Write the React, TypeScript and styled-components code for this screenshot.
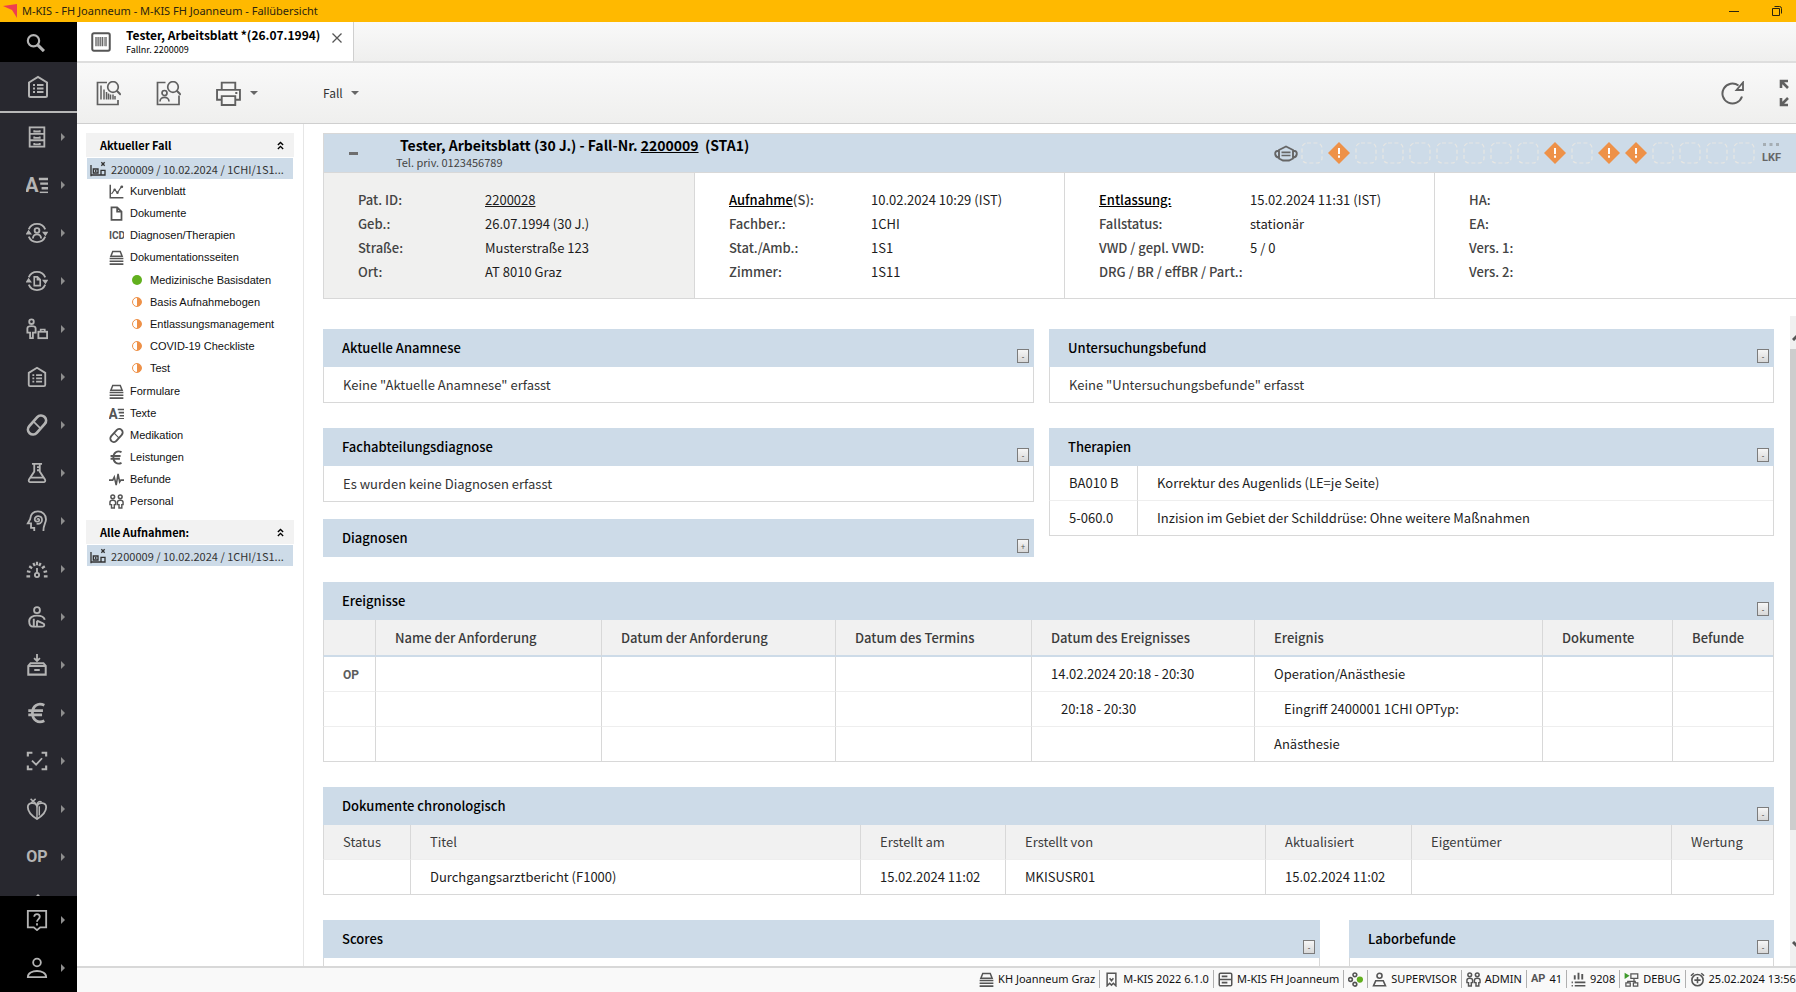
import React from 'react';
import styled, { createGlobalStyle, css } from 'styled-components';

const ui = '"Noto Sans CJK JP", "Open Sans", sans-serif';
const system = '"Noto Sans", "Open Sans", sans-serif';
const tree = '"Liberation Sans", Arial, sans-serif';
const blue = '#cddbe8';
const line = '#d8d8d8';

const Global = createGlobalStyle`
  * { box-sizing: border-box; }
  html, body { margin: 0; height: 100%; overflow: hidden; }
  body { font-family: ${ui}; font-size: 13px; line-height: 18px; color: #333; background: #fff; }
  button { font: inherit; color: inherit; background: none; border: 0; padding: 0; }
  a { color: inherit; }
  h1, h2, ul, dl, dd, p { margin: 0; padding: 0; }
  ul { list-style: none; }
`;

/* ---------- icons ---------- */

const Svg = styled.svg<{ $w?: number; $h?: number; $sw?: number }>`
  display: block;
  flex: none;
  width: ${p => p.$w ?? 24}px;
  height: ${p => p.$h ?? p.$w ?? 24}px;
  fill: none;
  stroke: currentColor;
  stroke-width: ${p => p.$sw ?? 2};
  .f { fill: currentColor; stroke: none; }
  text { fill: currentColor; stroke: none; font-family: Roboto, sans-serif; font-weight: 700; }
`;

const glyphs: Record<string, React.ReactNode> = {
  search: <><circle cx="9" cy="10.500" r="6.800" strokeWidth="2.600" /><path d="M14 15.500 21.500 23" strokeWidth="3.600" /></>,
  board: <><path d="M3 7.500 12 2l9 5.500V20.500a1.500 1.500 0 0 1-1.500 1.500h-15A1.500 1.500 0 0 1 3 20.500Z" /><path d="M7 10h2M7 13.500h2M7 17h2M11 10h6.500M11 13.500h6.500M11 17h6.500" strokeWidth="1.800" /></>,
  cabinet: <><rect x="4" y="1.500" width="16" height="21" /><path d="M4 8.500h16M4 15.500h16M9 4.500v1.500h6V4.500M9 11.500V13h6v-1.500M9 18.500V20h6v-1.500" strokeWidth="2" /></>,
  textA: <><text x="-1" y="20" fontSize="22">A</text><path d="M14 5.500H24M15.500 10.500H24M17 15.500H24" strokeWidth="2.600" /><path d="M15 20H24" strokeWidth="1.600" /></>,
  patientCycle: <><path d="M3 8A9.800 9.800 0 0 1 21 8M21 16A9.800 9.800 0 0 1 3 16" /><path className="f" d="M-.5 13.500 2.800 8.500l3.700 5ZM24.500 10.500 21.200 15.500l-3.700-5Z" /><circle cx="12" cy="9.300" r="2.600" /><path d="M7.500 18c.5-6 8.500-6 9 0" /></>,
  docCycle: <><path d="M3 8A9.800 9.800 0 0 1 21 8M21 16A9.800 9.800 0 0 1 3 16" /><path className="f" d="M-.5 13.500 2.800 8.500l3.700 5ZM24.500 10.500 21.200 15.500l-3.700-5Z" /><path d="M9 7.500h3.500l3 3v6.500H9ZM12.500 7.500v3h3" strokeWidth="1.800" /></>,
  visitor: <><circle cx="6" cy="4" r="2.500" /><path d="M4.500 22v-6H1.500v-4.500c0-3.500 9-3.500 9 0V16H7.500v6Z" strokeWidth="2" /><rect x="13.500" y="15" width="9.500" height="7" /><path d="M16 15v-2.500h4.500V15" strokeWidth="1.800" /></>,
  pill: <><rect x="6.500" y="0" width="11" height="24" rx="5.500" transform="rotate(42 12 12)" strokeWidth="3" /><path d="m8.300 8.300 7.400 7.400" strokeWidth="1.800" /></>,
  flask: <><path d="M6.500 2h11M9 2.500v8L3.300 19c-.8 1.500 0 3 1.500 3h14.400c1.500 0 2.300-1.500 1.500-3L15 10.500v-8M5.500 17h13M12 5.500h3M12 9h3" strokeWidth="2" /></>,
  head: <><path d="M9 23v-3.500H5.500v-5H2L4.500 10C5 4.500 8.500 1.500 13 1.500c5 0 8.800 3.500 8.800 8.500 0 4-3 6-2.800 13" /><path d="M12.500 10.500c0-1.500 2-1 2 .5 0 2.500-5 2.500-5-.8 0-4.700 8-4.700 8 .8 0 3.500-3 4.500-6 4" strokeWidth="1.900" /></>,
  gauge: <><path d="M.5 20h4M1 14.500l3.800.8M3.500 9l3.200 2.200M8 5.500l1.600 3.300M12 4v4M16 5.500l-1.600 3.300M20.500 9l-3.200 2.200M23 14.500l-3.800.8M23.500 20h-4" strokeWidth="2.400" /><path d="M12 11v5" strokeWidth="2" /><circle cx="12" cy="18.500" r="2.300" /></>,
  sitting: <><circle cx="12" cy="4.500" r="3.200" /><path d="M20.500 15c-1-4-4.500-4.500-8.500-4.500S3.500 12 3.500 16.500s2 6 4.500 6H18c2 0 3-2.500.5-3.500l-6.500-3M8.500 14v8M12 16v6" strokeWidth="2.100" /></>,
  inbox: <><path d="M12 0v7M8.800 4.500 12 7.700l3.200-3.200" /><path d="M2.500 13 5 10h14l2.500 3v9.500h-19ZM2.500 13h19M9 17.500h6" strokeWidth="2.200" /></>,
  euro: <path d="M20 3.500C13 0 7 4.500 7 12s6 12 13 8.500M2.500 9.500h16M2.500 14h15" strokeWidth="3" />,
  scan: <><path d="M2 7V3h5M17 3h5v4M22 17v4h-5M7 21H2v-4" strokeWidth="2.300" /><path d="m6.500 11.500 4.500 4.500 6.500-7" /></>,
  organ: <><path d="M12 23C5 18.500 2 14.500 2 10c0-5 8-6 10-1.500C14 4 22 5 22 10c0 4.500-3 8.500-10 13Z" /><path d="M12 22V8c0-4 3-5 5-3.500M5 1l5.500 5M10.500 1 5.500 5.500M14.500 9v10" strokeWidth="1.600" /></>,
  help: <><path d="M2 2h20v18h-6.500L12 23l-3.500-3H2Z" /><path d="M9 8.500c0-4 6-3.800 6 0 0 2.500-3 2.500-3 5.500M12 15.500V18" strokeWidth="2" /></>,
  user: <><circle cx="12" cy="6" r="4.200" /><path d="M2 22c0-9 20-9 20 0Z" /></>,
  barcode: <><rect x="1.500" y="1.500" width="21" height="21" rx="2" strokeWidth="2.400" /><path d="M6 6v11M8.500 6v11M11 6v11M13.500 6v11M18 6v11" strokeWidth="1.500" /><path d="M15.800 6v11" strokeWidth="1" /></>,
  barcodeSearch: <><path d="M11 1.500H1.500v22h20.500V19" strokeWidth="1.700" /><path d="M5 4.500v14M8 8.500v10M10.500 11v7.500M12.500 12.500v6M14.500 13.500v5M17 13.500v5M19 15v3.500" strokeWidth="1.500" /><circle cx="17" cy="6" r="5.300" strokeWidth="1.700" /><path d="m20.800 9.800 4 4" /></>,
  personSearch: <><path d="M9.500 1.500H1.500v22h21.500v-9" strokeWidth="1.700" /><circle cx="8.500" cy="12" r="2.500" strokeWidth="1.700" /><path d="M4 20.500c0-5.500 9-5.500 9 0" strokeWidth="1.700" /><circle cx="17" cy="6" r="5.300" strokeWidth="1.700" /><path d="m20.800 9.800 4 4" /></>,
  printer: <><path d="M5.500 8V1.500h13V8M5.500 18H1V8.500h22V18h-4.500M5.500 14.500h13V23h-13ZM18.500 11.500h2" strokeWidth="1.800" /></>,
  refresh: <><path d="M21 15.500A10 10 0 1 1 17.500 4.500" /><path d="M22 1.500v7.500h-6.500Z" strokeWidth="1.800" /></>,
  expand: <><path d="M2 9V2h7M2.500 2.500 9 9M2 19v7h7M2.500 25.500 9 19M26 9V2h-7M25.500 2.500 19 9M26 19v7h-7M25.500 25.500 19 19" strokeWidth="2.600" /></>,
  bed: <><path d="M1.500 6v17M1.500 21h21M22.500 22v-8h-6v7M5 12h7v6H5ZM17 2l5 5M22 2l-5 5" /><circle className="f" cx="8.500" cy="15" r="1.500" /></>,
  curve: <><path d="M2 1v21h21" strokeWidth="2.400" /><path d="m4 16 5-7 4.500 5L20 4" /><circle className="f" cx="9" cy="9" r="2" /><circle className="f" cx="13.500" cy="14" r="2" /><circle className="f" cx="20.500" cy="4.500" r="2.200" /></>,
  doc: <path d="M4 2h9l7 7v13H4ZM13 2v7h7" strokeWidth="2.800" />,
  icd: <text x="0" y="20" fontSize="21">ICD</text>,
  stack: <><path d="M6 2.500h12l3 7.500H3Z" strokeWidth="2.400" /><path d="M1 13.500h22M1 18h22M1 22.500h22" strokeWidth="2.600" /></>,
  pulse: <path d="M0 13h6l2.500-5 3 13 3-18 2.500 13 2-3H24" strokeWidth="2.500" />,
  people: <><circle cx="6" cy="4.500" r="3" strokeWidth="2.400" /><circle cx="18" cy="4.500" r="3" strokeWidth="2.400" /><path d="M4 22.500v-5.500H1.500v-4c0-4 9-4 9 0v4H8.500v5.500ZM16 22.500v-5.500h-2.500v-4c0-4 9-4 9 0v4H20.500v5.500Z" strokeWidth="2.300" /></>,
  mask: <><path d="M5 8 12 4.500 19 8v8.500L15 18.500H9L5 16.500ZM5 9H3.500C0 9 .5 15.500 5 15.500M19 9h1.500C24 9 23.500 15.500 19 15.500" strokeWidth="1.900" /><path d="M7.500 10.300h9M7.500 13.500h9" strokeWidth="1.700" /></>,
  bookmark: <path d="M5 2h14v20l-4-4-3 3-3-3-4 4ZM9 10l3 4 3-4" strokeWidth="2.400" />,
  server: <><rect x="2" y="2" width="20" height="20" rx="2" strokeWidth="2.400" /><path d="M2 12h20M6 7h9M6 17h9" strokeWidth="2.500" /></>,
  nodes: <><circle cx="11" cy="4.500" r="3" strokeWidth="2.600" /><circle cx="4" cy="12" r="3" strokeWidth="2.600" /><circle cx="11" cy="19.500" r="3" strokeWidth="2.600" /><circle cx="19" cy="12" r="5" fill="#62b01e" stroke="none" /></>,
  person: <><circle cx="12" cy="6" r="4" strokeWidth="2.600" /><path d="M6 14h12l3.500 8H2.500Z" strokeWidth="2.600" /></>,
  bars: <><path d="M6 12V5M12 12V1M18 12V3" strokeWidth="3" /><path d="M1 16.500h2M6 16.500h17M1 22h2M6 22h17" strokeWidth="2.600" /></>,
  debug: <><path d="M11 3h11v7H11ZM16 10v5M6 15h12M6 14v3M18 14v3M3 17.500h7v5H3ZM15 17.500h7v5h-7Z" strokeWidth="2" /><path d="M1 1v10l8-5Z" fill="#3f9a2b" stroke="none" /></>,
  alarm: <><circle cx="12" cy="13" r="9" strokeWidth="2.500" /><path d="M12 8v10M7 13h10M1.500 6l4.500-4M22.500 6 18 2" strokeWidth="2.500" /></>,
};

const boxes: Record<string, string> = { barcodeSearch: '0 0 25 25', personSearch: '0 0 25 25', expand: '0 0 28 28', icd: '0 0 31 24' };

const Icon = ({ name, w = 24, h }: { name: string; w?: number; h?: number }) => (
  <Svg viewBox={boxes[name] ?? '0 0 24 24'} $w={w} $h={h} aria-hidden="true">{glyphs[name]}</Svg>
);

const Caret = styled.span<{ $right?: boolean }>`
  width: 0;
  height: 0;
  ${p => p.$right
    ? css`border: 4px solid transparent; border-left-color: #8e8e8e; border-right: 0;`
    : css`border: 4px solid transparent; border-top-color: #666; border-bottom: 0;`}
`;

/* ---------- window frame ---------- */

const Shell = styled.div`
  display: flex;
  flex-direction: column;
  width: calc(100% + 11px);
  height: 100vh;
`;

const TitleBar = styled.header`
  display: flex;
  align-items: center;
  flex: none;
  height: 22px;
  padding: 0 9px 0 3px;
  gap: 5px;
  background: #ffb900;
  color: #2b2410;
  font: 11px/20px ${system};
`;

const WindowTitle = styled.h1`
  flex: 1;
  font: inherit;
`;

const WindowButton = styled.button`
  display: grid;
  place-items: center;
  width: 43px;
  height: 22px;
  margin-left: -5px;
`;

const Frame = styled.div`
  display: flex;
  flex: 1;
  min-height: 0;
`;

const Rail = styled.nav`
  display: flex;
  flex-direction: column;
  flex: none;
  width: 77px;
  background: #28282f;
  color: #b4b4b4;
`;

const RailScroll = styled.div`
  flex: 1;
  min-height: 0;
  overflow: hidden;
`;

const RailButton = styled.button<{ $black?: boolean; $short?: boolean; $home?: boolean }>`
  display: flex;
  align-items: center;
  flex: none;
  width: 77px;
  height: ${p => (p.$short ? 40 : 48)}px;
  padding-left: 26px;
  gap: 13px;
  background: ${p => (p.$black ? '#000' : 'transparent')};
  ${p => p.$home && css`height: 51px; border-bottom: 2px solid #b8b8b8;`}
`;

const RailWord = styled.span`
  width: 22px;
  font: 700 16px/24px Roboto, sans-serif;
`;

const Workspace = styled.div`
  display: flex;
  flex-direction: column;
  flex: 1;
  min-width: 0;
`;

const TabStrip = styled.div`
  display: flex;
  flex: none;
  height: 41px;
  border-bottom: 2px solid #dedede;
  background: linear-gradient(#f9f9f9, #efefee);
`;

const Tab = styled.div`
  display: flex;
  align-items: center;
  width: 277px;
  padding: 0 11px 0 14px;
  gap: 15px;
  background: #fff;
  border-right: 1px solid #cfcfcf;
  color: #555;
`;

const TabText = styled.div`
  flex: 1;
  color: #000;
  white-space: nowrap;
`;

const TabName = styled.div`
  font: 700 12px/16px ${ui};
`;

const TabSub = styled.div`
  font: 9px/14px ${ui};
`;

const TabClose = styled.button`
  margin: -8px 0 0 -3px;
  padding-right: 3px;
`;

const Toolbar = styled.div`
  display: flex;
  align-items: center;
  flex: none;
  height: 61px;
  padding-left: 19px;
  background: linear-gradient(#f9f9f9, #efefee);
  border-bottom: 1px solid #cfcfcf;
  color: #606060;
`;

const ToolGroup = styled.div`
  display: flex;
  align-items: center;
  width: 227px;
  gap: 35px;
`;

const ToolButton = styled.button`
  display: flex;
  align-items: center;
  gap: 9px;
`;

const MenuButton = styled(ToolButton)`
  flex: 1;
  gap: 8px;
  color: #333;
  font-size: 12px;
`;

const ToolEnd = styled.div`
  display: flex;
  align-items: center;
  gap: 34px;
`;

const Body = styled.div`
  display: flex;
  flex: 1;
  min-height: 0;
`;

/* ---------- case tree ---------- */

const Side = styled.aside`
  flex: none;
  width: 227px;
  padding: 9px 9px 0;
  border-right: 1px solid #e6e6e6;
  font: 11px/22px ${tree};
  color: #111;
`;

const SideHead = styled.button`
  display: flex;
  align-items: center;
  justify-content: space-between;
  width: 100%;
  height: 24px;
  padding: 0 10px 0 14px;
  background: #f2f2f2;
  font: 700 11px/22px ${ui};
  color: #000;
`;

const CaseRow = styled.a`
  display: flex;
  align-items: center;
  height: 21px;
  margin: 1px;
  padding-left: 3px;
  gap: 5px;
  background: ${blue};
  color: #333;
  font: 11px/18px ${ui};
  text-decoration: none;
  white-space: nowrap;
`;

const TreeList = styled.ul<{ $nested?: boolean }>`
  padding: ${p => (p.$nested ? '1px 0 1px 20px' : '0 0 8px 23px')};
`;

const TreeLink = styled.a`
  display: flex;
  align-items: center;
  height: 22px;
  gap: 6px;
  color: #111;
  text-decoration: none;
  white-space: nowrap;
`;

const TreeIcon = styled.span`
  display: grid;
  place-items: center;
  width: 15px;
  color: #555;
`;

const Dot = styled.span<{ $half?: boolean }>`
  width: 10px;
  height: 10px;
  border-radius: 50%;
  ${p => p.$half
    ? css`border: 1px solid #ee9148; background: linear-gradient(90deg, #fff 50%, #ee9148 50%);`
    : css`background: #62b01e;`}
`;

/* ---------- patient header ---------- */

const Main = styled.main`
  display: flex;
  flex-direction: column;
  flex: 1;
  min-width: 0;
`;

const Patient = styled.section`
  flex: none;
  margin: 9px 2px 17px 19px;
  border: 1px solid ${line};
`;

const PatientBar = styled.header`
  display: flex;
  align-items: center;
  height: 39px;
  padding: 0 22px 0 25px;
  background: ${blue};
  border-bottom: 1px solid ${line};
`;

const Minus = styled.button`
  width: 9px;
  height: 3px;
  background: #6e6e6e;
`;

const PatientText = styled.div`
  flex: 1;
  padding-left: 38px;
`;

const PatientName = styled.h2`
  padding-left: 4px;
  font: 700 14px/19px ${ui};
  color: #000;
  white-space: pre;
`;

const PatientSub = styled.p`
  font: 11px/15px ${ui};
  color: #444;
`;

const Flags = styled.ul`
  display: flex;
  gap: 5px;
  color: #666;
`;

const Flag = styled.li`
  display: grid;
  place-items: center;
  width: 22px;
  height: 22px;
`;

const Columns = styled.div`
  display: grid;
  grid-template-columns: repeat(4, 1fr);
`;

const Column = styled.dl<{ $label: number; $gray?: boolean }>`
  display: grid;
  grid-template-columns: ${p => p.$label}px 1fr;
  align-content: start;
  height: 125px;
  padding: 15px 0 0 34px;
  line-height: 24px;
  background: ${p => (p.$gray ? '#f0f0ef' : '#fff')};
  color: #1c1c1c;
  white-space: nowrap;
  & + & { border-left: 1px solid ${line}; }
`;

const Term = styled.dt`
  font-weight: 500;
  color: #444;
  a { color: #000; }
`;

/* ---------- cards ---------- */

const Scroller = styled.div`
  display: flex;
  flex: 1;
  min-height: 0;
`;

const Sheet = styled.div`
  display: flex;
  flex-direction: column;
  flex: 1;
  min-width: 0;
  gap: 25px;
  padding: 13px 16px 0 19px;
  overflow: hidden;
  & > * { flex: none; }
`;

const Pair = styled.div<{ $cols?: string; $gap?: number }>`
  display: grid;
  grid-template-columns: ${p => p.$cols ?? '711fr 725fr'};
  align-items: start;
  column-gap: ${p => p.$gap ?? 15}px;
`;

const Stack = styled.div`
  display: flex;
  flex-direction: column;
  gap: 17px;
`;

const CardHead = styled.header`
  display: flex;
  align-items: flex-end;
  justify-content: space-between;
  height: 38px;
  padding: 0 5px 4px 19px;
  background: ${blue};
`;

const CardTitle = styled.h2`
  font: 500 13px/30px ${ui};
  color: #000;
`;

const Toggle = styled.button`
  width: 12px;
  height: 14px;
  border: 1px solid #7c7c7c;
  background: linear-gradient(#f6f6f6, #d8d8d8);
  color: #555;
  font: 8px/11px ${system};
  text-align: center;
`;

const CardText = styled.p`
  height: 36px;
  padding: 0 19px;
  border: 1px solid ${line};
  border-top: 0;
  line-height: 35px;
`;

const CardBody = styled.div`
  height: 40px;
  border: 1px solid ${line};
  border-top: 0;
`;

const Table = styled.table<{ $strong?: boolean }>`
  width: 100%;
  table-layout: fixed;
  border-collapse: separate;
  border-spacing: 0;
  border-right: 1px solid ${line};

  th, td {
    height: 35px;
    padding: 0 0 0 19px;
    border-left: 1px solid ${line};
    border-bottom: 1px solid #eeeeee;
    text-align: left;
    white-space: nowrap;
    line-height: 18px;
  }
  td { color: #1c1c1c; }
  th {
    background: #f1f1f1;
    color: #3c3c3c;
    font-weight: ${p => (p.$strong ? 500 : 400)};
    ${p => p.$strong && css`height: 37px; border-bottom: 2px solid ${blue};`}
  }
  tbody tr:last-child td { border-bottom-color: ${line}; }
`;

const Col = styled.col<{ $w?: number }>`
  width: ${p => (p.$w ? `${p.$w}px` : 'auto')};
`;

const Indented = styled.span`
  padding-left: 10px;
`;

const Mark = styled.span`
  font: 700 12px/16px Roboto, sans-serif;
  color: #5c5c5c;
`;

const Scrollbar = styled.div`
  display: flex;
  flex-direction: column;
  align-items: center;
  flex: none;
  width: 17px;
  background: #f0f0f0;
  color: #555;
`;

const ScrollArrow = styled.button`
  display: grid;
  place-items: center;
  height: 42px;
`;

const ScrollTop = styled(ScrollArrow)`
  height: 33px;
  padding-top: 8px;
`;

const Thumb = styled.div`
  flex: 481;
  width: 100%;
  background: #cdcdcd;
`;

const Rest = styled.div`
  flex: 94;
`;

/* ---------- status bar ---------- */

const Status = styled.footer`
  display: flex;
  align-items: center;
  justify-content: flex-end;
  flex: none;
  height: 26px;
  padding-bottom: 2px;
  background: #f9f9f9;
  border-top: 2px solid #d8d8d8;
  font: 11px/16px ${system};
  color: #111;
`;

const StatusItem = styled.div`
  display: flex;
  align-items: center;
  height: 18px;
  padding: 0 4px;
  gap: 4px;
  color: #555;
  white-space: nowrap;
  & + & { border-left: 1px solid #b0b0b0; }
  &:last-child { padding-right: 2px; }
`;

const StatusText = styled.span`
  color: #111;
`;

const StatusWord = styled.b`
  font: 700 11px/16px Roboto, sans-serif;
`;

/* ---------- data ---------- */

const rail = ['cabinet', 'textA', 'patientCycle', 'docCycle', 'visitor', 'board', 'pill', 'flask', 'head', 'gauge', 'sitting', 'inbox', 'euro', 'scan', 'organ'];

const pages = ['Medizinische Basisdaten', 'Basis Aufnahmebogen', 'Entlassungsmanagement', 'COVID-19 Checkliste', 'Test'];

const treeTop: [string, string][] = [['curve', 'Kurvenblatt'], ['doc', 'Dokumente'], ['icd', 'Diagnosen/Therapien'], ['stack', 'Dokumentationsseiten']];
const treeRest: [string, string][] = [['stack', 'Formulare'], ['textA', 'Texte'], ['pill', 'Medikation'], ['euro', 'Leistungen'], ['pulse', 'Befunde'], ['people', 'Personal']];

const flags = 'm.!.......!.!!....L'.split('');

const events: React.ReactNode[][] = [
  [<Mark key="op">OP</Mark>, '', '', '', '14.02.2024 20:18 - 20:30', 'Operation/Anästhesie', '', ''],
  ['', '', '', '', <Indented key="t">20:18 - 20:30</Indented>, <Indented key="e">Eingriff 2400001 1CHI OPTyp:</Indented>, '', ''],
  ['', '', '', '', '', 'Anästhesie', '', ''],
];

/* ---------- composed parts ---------- */

const Chevrons = () => (
  <Svg viewBox="0 0 8 10" $w={7} $h={9} $sw={1.6}><path d="M1 4.500 4 1.500l3 3M1 9l3-3 3 3" /></Svg>
);

const TreeNode = ({ icon, label, children }: { icon: string; label: string; children?: React.ReactNode }) => (
  <li>
    <TreeLink href="#"><TreeIcon><Icon name={icon} w={15} h={icon === 'icd' ? 12 : 15} /></TreeIcon>{label}</TreeLink>
    {children}
  </li>
);

const CaseLink = () => (
  <CaseRow href="#"><Icon name="bed" w={16} />2200009 / 10.02.2024 / 1CHI/1S1...</CaseRow>
);

const Card = ({ title, closed, children }: { title: string; closed?: boolean; children?: React.ReactNode }) => (
  <section>
    <CardHead>
      <CardTitle>{title}</CardTitle>
      <Toggle aria-label={closed ? `${title} öffnen` : `${title} schließen`}>{closed ? '+' : '-'}</Toggle>
    </CardHead>
    {children}
  </section>
);

const DataTable = ({ widths, head, rows, strong }: { widths: (number | undefined)[]; head?: string[]; rows: React.ReactNode[][]; strong?: boolean }) => (
  <Table $strong={strong}>
    <colgroup>{widths.map((w, i) => <Col key={i} $w={w} />)}</colgroup>
    {head && <thead><tr>{head.map((h, i) => <th key={i} scope="col">{h}</th>)}</tr></thead>}
    <tbody>{rows.map((r, i) => <tr key={i}>{r.map((c, j) => <td key={j}>{c}</td>)}</tr>)}</tbody>
  </Table>
);

const Facts = ({ label, gray, rows }: { label: number; gray?: boolean; rows: [React.ReactNode, React.ReactNode][] }) => (
  <Column $label={label} $gray={gray}>
    {rows.map(([t, d], i) => <React.Fragment key={i}><Term>{t}</Term><dd>{d}</dd></React.Fragment>)}
  </Column>
);

const FlagCell = ({ kind }: { kind: string }) => (
  <Flag>
    {kind === 'm' && <Icon name="mask" w={24} />}
    {kind === '!' && (
      <Svg viewBox="0 0 22 22" $w={22}>
        <path d="M11 0 22 11 11 22 0 11Z" fill="#ee9148" stroke="none" />
        <path d="M11 6v6M11 13.500v2.200" stroke="#fff" />
      </Svg>
    )}
    {kind === 'L' && (
      <Svg viewBox="0 0 22 22" $w={22}>
        <path d="M3 2.500h3M9.500 2.500h3M16 2.500h3" stroke="#a5adb3" strokeWidth="3" />
        <text x="2" y="19" fontSize="11">LKF</text>
      </Svg>
    )}
    {kind === '.' && (
      <Svg viewBox="0 0 22 22" $w={22}>
        <rect x="1" y="1" width="20" height="20" rx="5" stroke="#e6e6e3" strokeWidth="1.200" strokeDasharray="4 2.500" />
      </Svg>
    )}
  </Flag>
);

const StatusEntry = ({ icon, word, text }: { icon?: string; word?: string; text?: string }) => (
  <StatusItem>
    {icon && <Icon name={icon} w={15} />}
    {word && <StatusWord>{word}</StatusWord>}
    {text && <StatusText>{text}</StatusText>}
  </StatusItem>
);

export default function App() {
  return (
    <Shell>
      <Global />
      <TitleBar>
        <Svg viewBox="0 0 14 14" $w={14}><path d="M0 2 14 0v14L9 6Z" fill="#ee3e50" stroke="none" /></Svg>
        <WindowTitle>M-KIS - FH Joanneum - M-KIS FH Joanneum - Fallübersicht</WindowTitle>
        <WindowButton aria-label="Minimieren"><Svg viewBox="0 0 10 10" $w={10} $sw={1}><path d="M0 5.500h10" /></Svg></WindowButton>
        <WindowButton aria-label="Wiederherstellen"><Svg viewBox="0 0 10 10" $w={10} $sw={1}><path d="M.5 2.500h7v7h-7ZM2.500.5h5a2 2 0 0 1 2 2v5" /></Svg></WindowButton>
      </TitleBar>
      <Frame>
        <Rail>
          <RailButton $black $short aria-label="Suche"><Icon name="search" w={20} /></RailButton>
          <RailButton $home aria-label="Start"><Icon name="board" /></RailButton>
          <RailScroll>
            {rail.map((name, i) => <RailButton key={i} aria-label={name}><Icon name={name} w={22} /><Caret $right /></RailButton>)}
            <RailButton><RailWord>OP</RailWord><Caret $right /></RailButton>
            <RailButton aria-label="Weitere"><Svg viewBox="0 0 24 24"><path className="f" d="M10 3l2-2 2 2v3h-4Z" /></Svg></RailButton>
          </RailScroll>
          <RailButton $black aria-label="Hilfe"><Icon name="help" w={22} /><Caret $right /></RailButton>
          <RailButton $black aria-label="Benutzer"><Icon name="user" w={22} /><Caret $right /></RailButton>
        </Rail>
        <Workspace>
          <TabStrip>
            <Tab>
              <Icon name="barcode" w={20} />
              <TabText>
                <TabName>Tester, Arbeitsblatt *(26.07.1994)</TabName>
                <TabSub>Fallnr. 2200009</TabSub>
              </TabText>
              <TabClose aria-label="Tab schließen"><Svg viewBox="0 0 10 10" $w={10} $sw={1.3}><path d="m.5.5 9 9M9.500.5l-9 9" /></Svg></TabClose>
            </Tab>
          </TabStrip>
          <Toolbar>
            <ToolGroup>
              <ToolButton aria-label="Fallsuche"><Icon name="barcodeSearch" w={25} /></ToolButton>
              <ToolButton aria-label="Patientensuche"><Icon name="personSearch" w={25} /></ToolButton>
              <ToolButton aria-label="Drucken"><Icon name="printer" w={25} /><Caret /></ToolButton>
            </ToolGroup>
            <MenuButton>Fall <Caret /></MenuButton>
            <ToolEnd>
              <ToolButton aria-label="Aktualisieren"><Icon name="refresh" w={24} /></ToolButton>
              <ToolButton aria-label="Vollbild"><Icon name="expand" w={28} /></ToolButton>
            </ToolEnd>
          </Toolbar>
          <Body>
            <Side>
              <SideHead>Aktueller Fall <Chevrons /></SideHead>
              <CaseLink />
              <TreeList>
                {treeTop.map(([icon, label]) => (
                  <TreeNode key={label} icon={icon} label={label}>
                    {icon === 'stack' && (
                      <TreeList $nested>
                        {pages.map((p, i) => <li key={p}><TreeLink href="#"><TreeIcon><Dot $half={i > 0} /></TreeIcon>{p}</TreeLink></li>)}
                      </TreeList>
                    )}
                  </TreeNode>
                ))}
                {treeRest.map(([icon, label]) => <TreeNode key={label} icon={icon} label={label} />)}
              </TreeList>
              <SideHead>Alle Aufnahmen: <Chevrons /></SideHead>
              <CaseLink />
            </Side>
            <Main>
              <Patient>
                <PatientBar>
                  <Minus aria-label="Einklappen" />
                  <PatientText>
                    <PatientName>Tester, Arbeitsblatt (30 J.) - Fall-Nr. <a href="#">2200009</a>{'  '}(STA1)</PatientName>
                    <PatientSub>Tel. priv. 0123456789</PatientSub>
                  </PatientText>
                  <Flags>{flags.map((f, i) => <FlagCell key={i} kind={f} />)}</Flags>
                </PatientBar>
                <Columns>
                  <Facts gray label={127} rows={[['Pat. ID:', <a href="#">2200028</a>], ['Geb.:', '26.07.1994 (30 J.)'], ['Straße:', 'Musterstraße 123'], ['Ort:', 'AT 8010 Graz']]} />
                  <Facts label={142} rows={[[<><a href="#">Aufnahme</a>(S):</>, '10.02.2024 10:29 (IST)'], ['Fachber.:', '1CHI'], ['Stat./Amb.:', '1S1'], ['Zimmer:', '1S11']]} />
                  <Facts label={151} rows={[[<a href="#">Entlassung:</a>, '15.02.2024 11:31 (IST)'], ['Fallstatus:', 'stationär'], ['VWD / gepl. VWD:', '5 / 0'], ['DRG / BR / effBR / Part.:', '']]} />
                  <Facts label={151} rows={[['HA:', ''], ['EA:', ''], ['Vers. 1:', ''], ['Vers. 2:', '']]} />
                </Columns>
              </Patient>
              <Scroller>
                <Sheet>
                  <Pair>
                    <Card title="Aktuelle Anamnese"><CardText>Keine "Aktuelle Anamnese" erfasst</CardText></Card>
                    <Card title="Untersuchungsbefund"><CardText>Keine "Untersuchungsbefunde" erfasst</CardText></Card>
                  </Pair>
                  <Pair>
                    <Stack>
                      <Card title="Fachabteilungsdiagnose"><CardText>Es wurden keine Diagnosen erfasst</CardText></Card>
                      <Card title="Diagnosen" closed />
                    </Stack>
                    <Card title="Therapien">
                      <DataTable widths={[88, undefined]} rows={[['BA010 B', 'Korrektur des Augenlids (LE=je Seite)'], ['5-060.0', 'Inzision im Gebiet der Schilddrüse: Ohne weitere Maßnahmen']]} />
                    </Card>
                  </Pair>
                  <Card title="Ereignisse">
                    <DataTable
                      strong
                      widths={[52, 226, 234, 196, 223, undefined, 130, 101]}
                      head={['', 'Name der Anforderung', 'Datum der Anforderung', 'Datum des Termins', 'Datum des Ereignisses', 'Ereignis', 'Dokumente', 'Befunde']}
                      rows={events}
                    />
                  </Card>
                  <Card title="Dokumente chronologisch">
                    <DataTable
                      widths={[87, undefined, 145, 260, 146, 260, 102]}
                      head={['Status', 'Titel', 'Erstellt am', 'Erstellt von', 'Aktualisiert', 'Eigentümer', 'Wertung']}
                      rows={[['', 'Durchgangsarztbericht (F1000)', '15.02.2024 11:02', 'MKISUSR01', '15.02.2024 11:02', '', '']]}
                    />
                  </Card>
                  <Pair $cols="997fr 425fr" $gap={29}>
                    <Card title="Scores"><CardBody /></Card>
                    <Card title="Laborbefunde"><CardBody /></Card>
                  </Pair>
                </Sheet>
                <Scrollbar>
                  <ScrollTop aria-label="Nach oben"><Svg viewBox="0 0 14 9" $w={14} $h={9} $sw={3}><path d="m1 8 6-6 6 6" /></Svg></ScrollTop>
                  <Thumb />
                  <Rest />
                  <ScrollArrow aria-label="Nach unten"><Svg viewBox="0 0 14 9" $w={14} $h={9} $sw={3}><path d="m1 1 6 6 6-6" /></Svg></ScrollArrow>
                </Scrollbar>
              </Scroller>
            </Main>
          </Body>
          <Status>
            <StatusEntry icon="stack" text="KH Joanneum Graz" />
            <StatusEntry icon="bookmark" text="M-KIS 2022 6.1.0" />
            <StatusEntry icon="server" text="M-KIS FH Joanneum" />
            <StatusEntry icon="nodes" />
            <StatusEntry icon="person" text="SUPERVISOR" />
            <StatusEntry icon="people" text="ADMIN" />
            <StatusEntry word="AP" text="41" />
            <StatusEntry icon="bars" text="9208" />
            <StatusEntry icon="debug" text="DEBUG" />
            <StatusEntry icon="alarm" text="25.02.2024 13:56:4" />
          </Status>
        </Workspace>
      </Frame>
    </Shell>
  );
}
